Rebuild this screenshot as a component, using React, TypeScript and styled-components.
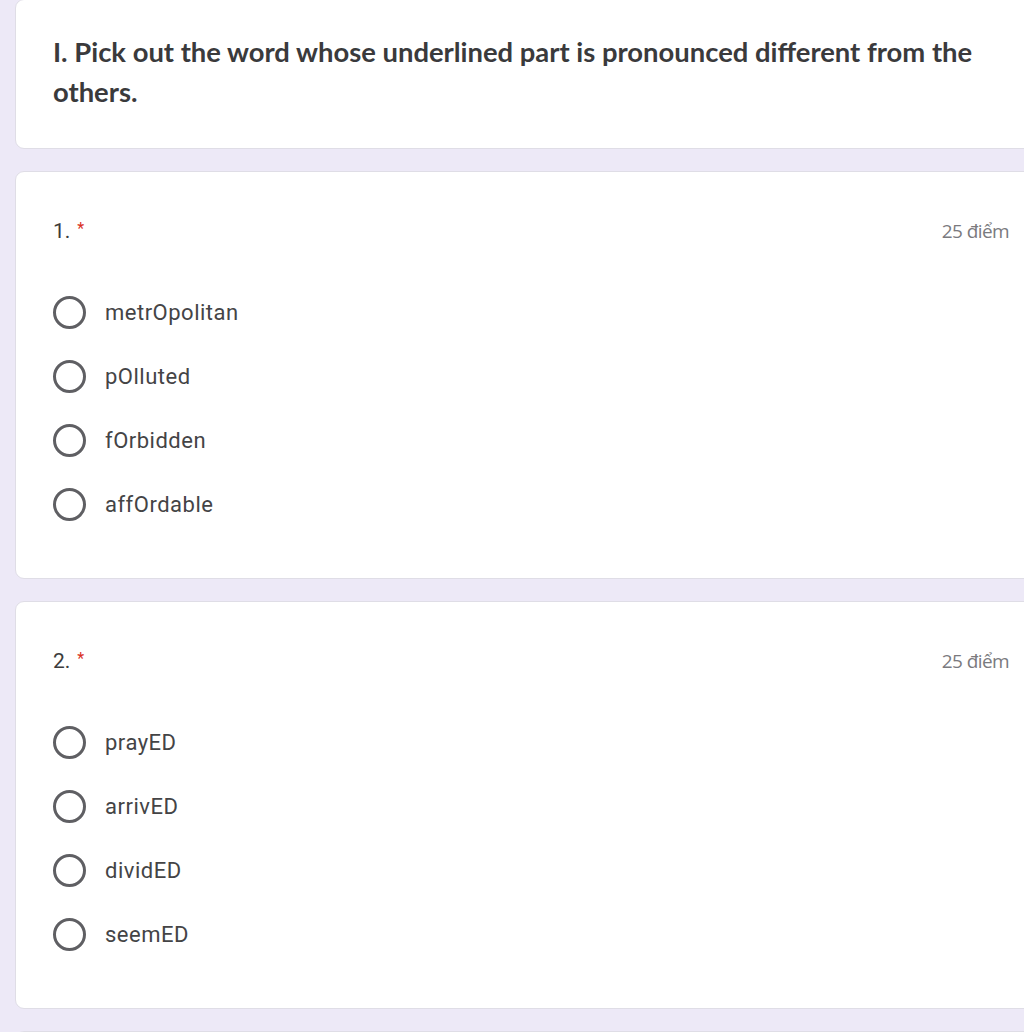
import styled, { createGlobalStyle } from "styled-components";

type Question = {
  id: number;
  points: number;
  options: string[];
};

const questions: Question[] = [
  {
    id: 1,
    points: 25,
    options: ["metrOpolitan", "pOlluted", "fOrbidden", "affOrdable"],
  },
  {
    id: 2,
    points: 25,
    options: ["prayED", "arrivED", "dividED", "seemED"],
  },
];

const GlobalStyle = createGlobalStyle`
  html, body {
    margin: 0;
    padding: 0;
    background: #ede9f7;
    overflow: hidden;
  }
`;

const Page = styled.div`
  display: flex;
  flex-direction: column;
  gap: 22px;
  padding-left: 15px;
  height: 1032px;
  overflow: hidden;
`;

const Card = styled.section`
  width: 1033px;
  flex-shrink: 0;
  box-sizing: border-box;
  background: #fff;
  border: 1px solid #dfdde6;
  border-radius: 9px;
  padding: 40px 38px 42px 37px;
`;

const TitleCard = styled(Card)`
  margin-top: -1px;
  padding: 32px 38px 36px 37px;
`;

const Title = styled.div`
  font-family: Lato, "Open Sans", sans-serif;
  font-weight: 700;
  font-size: 27.4px;
  line-height: 40px;
  color: #3a3a3c;
  max-width: 945px;
`;

const Header = styled.div`
  display: flex;
  justify-content: space-between;
  align-items: center;
  height: 38px;
`;

const Number = styled.div`
  font-family: Roboto, "Liberation Sans", sans-serif;
  font-size: 21px;
  color: #3c3c3c;
`;

const Star = styled.span`
  color: #d93025;
  font-size: 16px;
  vertical-align: 4px;
  margin-left: 7px;
`;

const Points = styled.div`
  font-family: "Open Sans", sans-serif;
  font-size: 19px;
  letter-spacing: -0.6px;
  color: #7a7a7e;
`;

const Options = styled.div`
  margin-top: 30px;
  display: flex;
  flex-direction: column;
`;

const Option = styled.label`
  display: flex;
  align-items: center;
  height: 64px;
  gap: 19px;
  font-family: Roboto, "Liberation Sans", sans-serif;
  font-size: 22px;
  letter-spacing: 0.5px;
  color: #444446;
`;

const Radio = styled.span`
  width: 33px;
  height: 33px;
  box-sizing: border-box;
  border: 3.5px solid #5f5f63;
  border-radius: 50%;
  flex-shrink: 0;
`;

export default function App() {
  return (
    <>
      <GlobalStyle />
      <Page>
        <TitleCard>
          <Title>
            I. Pick out the word whose underlined part is pronounced different
            from the others.
          </Title>
        </TitleCard>
        {questions.map((q) => (
          <Card key={q.id}>
            <Header>
              <Number>
                {q.id}.<Star>*</Star>
              </Number>
              <Points>{q.points} điểm</Points>
            </Header>
            <Options>
              {q.options.map((opt) => (
                <Option key={opt}>
                  <Radio />
                  {opt}
                </Option>
              ))}
            </Options>
          </Card>
        ))}
        <Card />
      </Page>
    </>
  );
}
